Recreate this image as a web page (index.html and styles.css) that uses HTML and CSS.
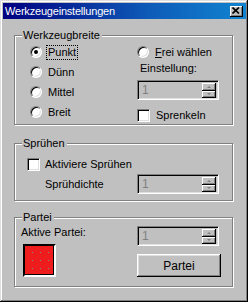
FILE: index.html
```html
<!DOCTYPE html>
<html>
<head>
<meta charset="utf-8">
<link rel="stylesheet" href="styles.css">
</head>
<body>
<div class="win">
  <div class="title">
    <span class="ttext">Werkzeugeinstellungen</span>
    <span class="close"><svg width="8" height="7" viewBox="0 0 8 7"><path d="M0.5 0.5 L7 6.5 M7 0.5 L0.5 6.5" stroke="#000" stroke-width="1.7" fill="none"/></svg></span>
  </div>
  <div class="body">
    <div class="group g1">
      <span class="legend">Werkzeugbreite</span>
      <div class="g1grid">
        <div class="col left">
          <div class="opt"><span class="radio on"></span><span class="txt focus">Punkt</span></div>
          <div class="opt"><span class="radio"></span><span class="txt">Dünn</span></div>
          <div class="opt"><span class="radio"></span><span class="txt">Mittel</span></div>
          <div class="opt"><span class="radio"></span><span class="txt">Breit</span></div>
        </div>
        <div class="col right">
          <div class="opt"><span class="radio"></span><span class="txt"><u>F</u>rei wählen</span></div>
          <div class="lbl">Einstellung:</div>
          <div class="spin"><span class="val">1</span><span class="btns"><span class="sb"><i class="up"></i></span><span class="sb"><i class="dn"></i></span></span></div>
          <div class="chkrow"><span class="check"></span><span class="txt">Sprenkeln</span></div>
        </div>
      </div>
    </div>
    <div class="group g2">
      <span class="legend">Sprühen</span>
      <div class="g2row1"><span class="check"></span><span class="txt">Aktiviere Sprühen</span></div>
      <div class="g2row2"><span class="lbl2">Sprühdichte</span><div class="spin"><span class="val">1</span><span class="btns"><span class="sb"><i class="up"></i></span><span class="sb"><i class="dn"></i></span></span></div></div>
    </div>
    <div class="group g3">
      <span class="legend">Partei</span>
      <div class="g3grid">
        <div class="col">
          <div class="lbl3">Aktive Partei:</div>
          <div class="swatch"><svg width="29" height="29" viewBox="0 0 29 29"><rect x="7" y="6" width="1" height="1" fill="#909090"/><rect x="15" y="6" width="1" height="1" fill="#909090"/><rect x="23" y="6" width="1" height="1" fill="#909090"/><rect x="7" y="14" width="1" height="1" fill="#909090"/><rect x="15" y="14" width="1" height="1" fill="#909090"/><rect x="23" y="14" width="1" height="1" fill="#909090"/><rect x="7" y="22" width="1" height="1" fill="#909090"/><rect x="15" y="22" width="1" height="1" fill="#909090"/><rect x="23" y="22" width="1" height="1" fill="#909090"/></svg></div>
        </div>
        <div class="col">
          <div class="spin"><span class="val">1</span><span class="btns"><span class="sb"><i class="up"></i></span><span class="sb"><i class="dn"></i></span></span></div>
          <div class="button">Partei</div>
        </div>
      </div>
    </div>
  </div>
</div>
</body>
</html>
```

FILE: styles.css
```css
* { box-sizing: border-box; }
html, body { margin: 0; padding: 0; background: #c0c0c0; }
body { font-family: "Liberation Sans", Arial, sans-serif; font-size: 11px; color: #000; }

.win {
  width: 248px; height: 302px;
  background: #c0c0c0;
  padding: 3px;
  box-shadow: inset -1px -1px 0 #000, inset 1px 1px 0 #dfdfdf, inset -2px -2px 0 #808080, inset 2px 2px 0 #fff;
  display: flex; flex-direction: column;
}
.title {
  height: 16px;
  margin-right: -1px;
  background: linear-gradient(90deg, #000080 0%, #0e5bb8 60%, #1084d0 100%);
  color: #fff;
  display: flex; align-items: center; justify-content: space-between;
  padding: 0 3px 0 2px;
}
.ttext { font-size: 11px; line-height: 16px; letter-spacing: -0.2px; }
.close {
  width: 13px; height: 11px; background: #c0c0c0;
  box-shadow: inset -1px -1px 0 #000, inset 1px 1px 0 #fff, inset -2px -2px 0 #808080;
  display: flex; align-items: center; justify-content: center;
  padding: 0 1px 1px 0;
}
.close svg { display: block; }

.body { padding: 0 0 0 11px; display: flex; flex-direction: column; }

.group {
  width: 219px;
  border: 1px solid #808080;
  box-shadow: inset 1px 1px 0 #fff, 1px 1px 0 #fff;
  display: flex; flex-direction: column;
}
.legend {
  align-self: flex-start;
  line-height: 13px; height: 13px;
  margin: -7px 0 0 7px;
  padding: 0 2px 0 1px;
  background: #c0c0c0;
}
.g1 { margin-top: 16px; height: 90px; }
.g2 { margin-top: 18px; height: 58px; }
.g3 { margin-top: 16px; height: 70px; }

.g1grid { display: grid; grid-template-columns: 122px 1fr; }
.left { padding-left: 15px; }
.opt { height: 20px; display: flex; align-items: center; }
.txt { border: 1px dotted transparent; padding: 0 1px; line-height: 13px; }
.focus { border-color: #000; }

.radio {
  width: 12px; height: 12px; border-radius: 50%;
  background: #fff;
  border: 1px solid; border-color: #808080 #fff #fff #808080;
  box-shadow: inset 1px 1px 0 #000, inset -1px -1px 0 #dfdfdf;
  margin-right: 4px; position: relative; flex: none;
}
.radio.on::after {
  content: ""; position: absolute; left: 3px; top: 3px;
  width: 4px; height: 4px; border-radius: 50%; background: #000;
}
.check {
  width: 13px; height: 13px; background: #fff; flex: none;
  border: 1px solid; border-color: #808080 #fff #fff #808080;
  box-shadow: inset 1px 1px 0 #000, inset -1px -1px 0 #dfdfdf;
}

.right { display: flex; flex-direction: column; }
.lbl { line-height: 13px; margin: 0 0 5px 3px; }
.chkrow { display: flex; align-items: center; margin-top: 8px; }
.chkrow .check { margin-right: 4px; }

.spin {
  width: 82px; height: 20px; background: #c0c0c0;
  border: 1px solid; border-color: #808080 #fff #fff #808080;
  box-shadow: inset 1px 1px 0 #000, inset -1px -1px 0 #dfdfdf;
  display: flex; justify-content: space-between;
  padding: 1px 2px 1px 1px;
}
.val { color: #808080; line-height: 16px; padding-left: 3px; font-size: 12px; }
.btns { display: flex; flex-direction: column; width: 14px; padding-top: 1px; }
.sb {
  height: 8px; background: #c0c0c0;
  box-shadow: inset -1px -1px 0 #000, inset 1px 1px 0 #fff, inset -2px -2px 0 #808080;
  display: flex; align-items: center; justify-content: center;
}
.sb i { width: 0; height: 0; border-left: 2px solid transparent; border-right: 2px solid transparent; }
.sb .up { border-bottom: 2px solid #808080; }
.sb .dn { border-top: 2px solid #808080; }

.g2row1 { display: flex; align-items: center; height: 20px; margin-top: 4px; padding-left: 12px; }
.g2row1 .check { margin-right: 3px; }
.g2row2 { display: grid; grid-template-columns: 122px 82px; align-items: center; height: 20px; }
.lbl2 { padding-left: 30px; }

.g3grid { display: grid; grid-template-columns: 122px 1fr; }
.lbl3 { line-height: 13px; margin: 2px 0 0 6px; }
.swatch {
  width: 33px; height: 33px; margin: 5px 0 0 8px;
  background: #ee1c1c;
  border: 2px solid; border-color: #000 #fff #fff #000;
  box-shadow: inset -1px -1px 0 #000;
}
.swatch svg { display: block; }
.g3 .spin { margin-top: 2px; }
.button {
  width: 84px; height: 23px; margin-top: 8px;
  box-shadow: inset -1px -1px 0 #000, inset 1px 1px 0 #fff, inset -2px -2px 0 #808080, inset 2px 2px 0 #dfdfdf;
  display: flex; align-items: center; justify-content: center;
  font-size: 12px;
}
```
